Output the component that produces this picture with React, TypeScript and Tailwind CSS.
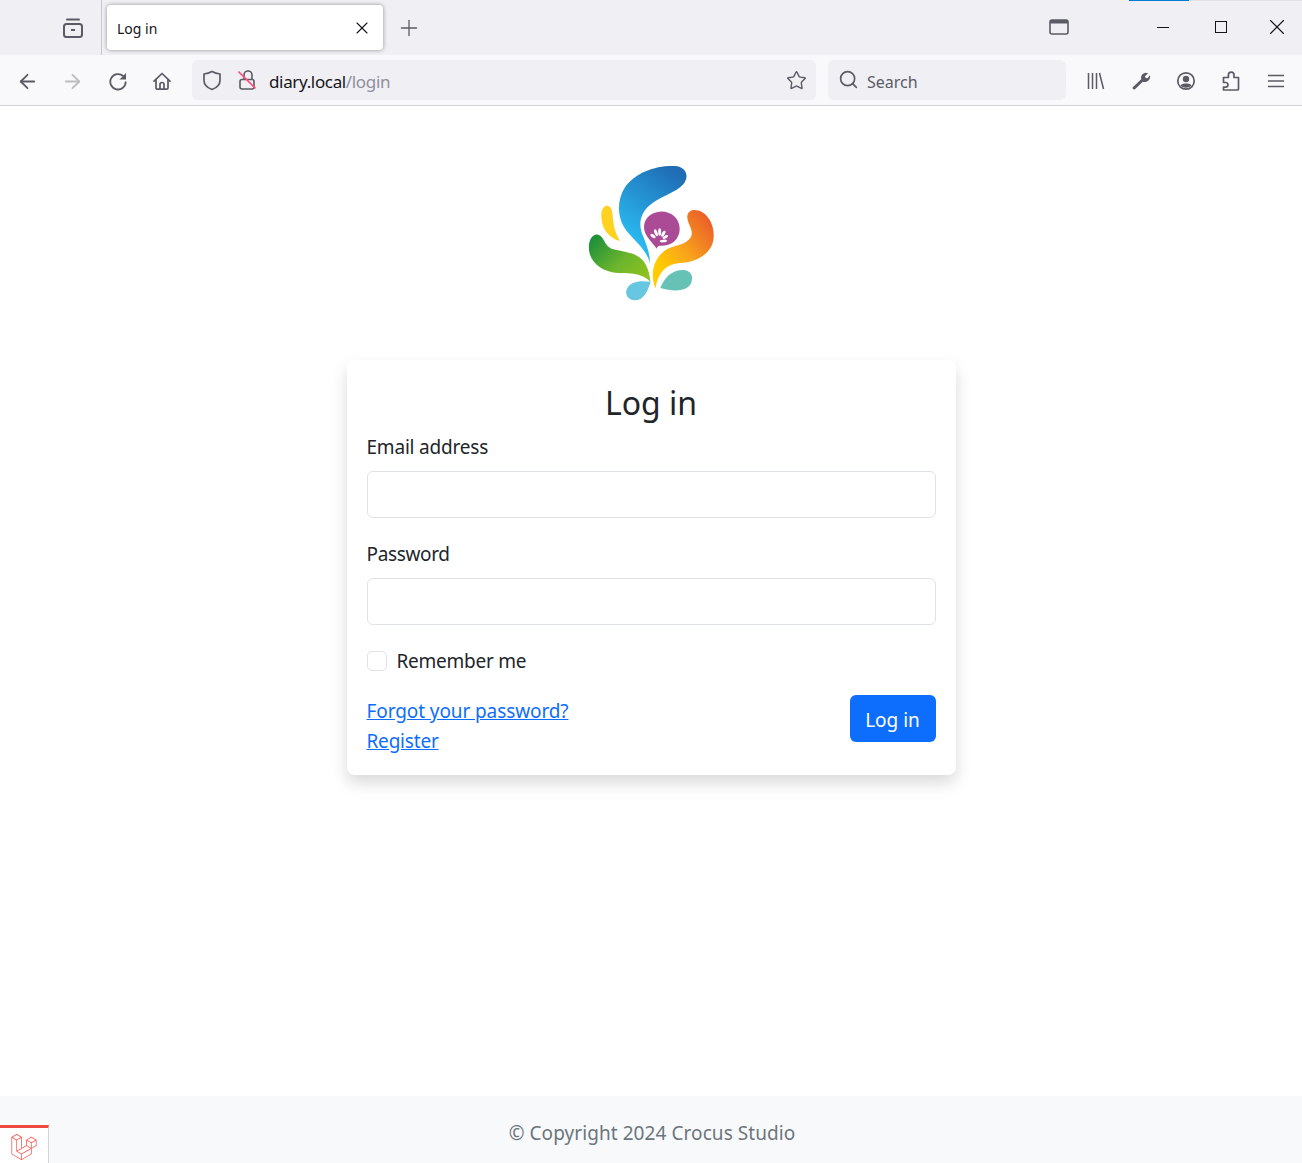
import { ArrowLeft, ArrowRight, Plus, Search, Star, X } from "lucide-react";
import { SiLaravel } from "react-icons/si";

const ToolButton = ({ children }: { children: React.ReactNode }) => (
  <div className="w-[45px] h-full flex items-center justify-center pt-[2px] text-[#5b5b66]">{children}</div>
);

const FirefoxView = () => (
  <svg width="22" height="22" viewBox="0 0 22 22" fill="none" stroke="#5b5b66" strokeWidth="2">
    <path d="M5 2.500h12" strokeLinecap="round" />
    <rect x="2" y="7" width="18" height="13" rx="2.500" />
    <path d="M9 13h4" />
  </svg>
);

const TabsIcon = () => (
  <svg width="20" height="16" viewBox="0 0 20 16" fill="none">
    <rect x="1" y="1" width="18" height="14" rx="2" stroke="#5b5b66" strokeWidth="1.600" />
    <path d="M1 2.500a1.500 1.500 0 0 1 1.500-1.500h15a1.500 1.500 0 0 1 1.500 1.500V4.500H1z" fill="#5b5b66" />
  </svg>
);

const ReloadIcon = () => (
  <svg width="20" height="20" viewBox="0 0 20 20" fill="none">
    <path d="M15.300 5.200A7.700 7.700 0 1 0 17.700 10.500" stroke="#5b5b66" strokeWidth="1.800" />
    <path d="M18 2v6.500h-6.500z" fill="#5b5b66" />
  </svg>
);

const HomeIcon = () => (
  <svg width="20" height="20" viewBox="0 0 20 20" fill="none" stroke="#5b5b66" strokeWidth="1.700" strokeLinejoin="round" strokeLinecap="round">
    <path d="M2 10.200L10 2.500l8 7.700" />
    <path d="M4 8.500V17a1.200 1.200 0 0 0 1.200 1.200h9.600A1.200 1.200 0 0 0 16 17V8.500" />
    <path d="M8 18v-4.500a2 2 0 0 1 4 0V18" />
  </svg>
);

const ShieldIcon = () => (
  <svg width="20" height="21" viewBox="0 0 20 21" fill="none" stroke="#5b5b66" strokeWidth="1.700" strokeLinejoin="round">
    <path d="M10 1.500c2.500 1.400 5 2.200 8 2.500v6.500c0 4-3.500 7.300-8 9-4.500-1.700-8-5-8-9V4c3-.3 5.500-1.100 8-2.500z" />
  </svg>
);

const BrokenLock = () => (
  <svg width="18" height="20" viewBox="0 0 18 20" fill="none">
    <path d="M6 9.500V5a4 4 0 0 1 8 0v4.500" stroke="#5b5b66" strokeWidth="1.600" />
    <rect x="2" y="9.500" width="14" height="9.500" rx="2" stroke="#5b5b66" strokeWidth="1.600" />
    <path d="M0.500 1.500l17 17" stroke="#ff4f79" strokeWidth="1.600" />
  </svg>
);

const LibraryIcon = () => (
  <svg width="18" height="18" viewBox="0 0 18 18" fill="none" stroke="#5b5b66" strokeWidth="1.500">
    <path d="M1.500 1v16M5.500 1v16M9.500 1v16M12.500 1l4 16" />
  </svg>
);

const WrenchIcon = () => (
  <svg width="20" height="20" viewBox="0 0 20 20">
    <path fill="#5b5b66" d="M1.800 16.300L10.200 8.200C9.500 5 11.500 2 15 1.800C15.800 1.800 16.500 2 17 2.200L13.800 5.400L14.800 7L16.500 7.200L19 4.200C19.700 7.800 17.300 11 13.500 11C12.800 11 12.300 10.900 11.800 10.700L4 18.300C3 19.300 0.800 17.500 1.800 16.300Z" />
  </svg>
);

const AccountIcon = () => (
  <svg width="20" height="20" viewBox="0 0 20 20" fill="none">
    <circle cx="10" cy="10" r="8.200" stroke="#5b5b66" strokeWidth="1.700" />
    <circle cx="10" cy="8" r="3.200" fill="#5b5b66" />
    <path d="M4.500 14.500c1-1.500 2.800-2 5.500-2s4.500.5 5.500 2c-1.400 1.400-3.300 2.200-5.500 2.200s-4.100-.8-5.500-2.200z" fill="#5b5b66" />
  </svg>
);

const PuzzleIcon = () => (
  <svg width="18" height="20" viewBox="0 0 18 20" fill="none" stroke="#5b5b66" strokeWidth="1.700" strokeLinejoin="round">
    <path d="M1.500 19h14a1 1 0 0 0 1-1V6.500h-4.500V4a2.800 2.800 0 0 0-5.600 0v2.500H1.500V11.500h2.200a2.300 2.300 0 0 1 0 4.600H1.500z" />
  </svg>
);

const MenuIcon = () => (
  <svg width="16" height="14" viewBox="0 0 16 14" fill="none" stroke="#5b5b66" strokeWidth="1.500">
    <path d="M0 1.500h16M0 7h16M0 12.500h16" />
  </svg>
);

const Logo = () => (
  <svg width="150" height="155" viewBox="0 0 450 465" className="mr-[2px]">
    <defs>
      <linearGradient id="blue" x1="0.7" y1="0" x2="0.3" y2="0.8">
        <stop offset="0" stopColor="#1f6db5" />
        <stop offset="1" stopColor="#2ab9ef" />
      </linearGradient>
      <linearGradient id="green" x1="0" y1="0" x2="1" y2="0.8">
        <stop offset="0" stopColor="#0f8a3c" />
        <stop offset="0.6" stopColor="#6cb52d" />
        <stop offset="1" stopColor="#8dc21f" />
      </linearGradient>
      <linearGradient id="orange" x1="0.9" y1="0.05" x2="0.2" y2="0.8">
        <stop offset="0" stopColor="#ea5b2a" />
        <stop offset="0.6" stopColor="#f9a51a" />
        <stop offset="1" stopColor="#ffcc00" />
      </linearGradient>
    </defs>
    <path fill="url(#blue)" d="M225 325C215 285 180 258 155 228C125 190 125 135 150 97C180 52 245 30 300 33C332 35 345 62 325 88C305 112 255 125 225 150C195 175 188 210 205 245C215 270 225 295 225 325Z" />
    <path fill="#ab4b96" d="M245 281C240 272 230 264 222 252C204 232 202 205 218 187C238 165 275 163 297 183C320 204 320 240 297 260C283 272 262 272 253 272C248 274 246 277 245 281Z" />
    <g fill="#fff">
      <ellipse cx="234" cy="243" rx="5" ry="9" transform="rotate(-55 234 243)" />
      <ellipse cx="243" cy="233" rx="4.500" ry="11" transform="rotate(-20 243 233)" />
      <ellipse cx="254" cy="231" rx="4.500" ry="11" />
      <ellipse cx="265" cy="236" rx="4.500" ry="10" transform="rotate(30 265 236)" />
      <ellipse cx="271" cy="246" rx="4.500" ry="9" transform="rotate(65 271 246)" />
      <ellipse cx="265" cy="258" rx="4" ry="11" transform="rotate(85 265 258)" />
    </g>
    <path fill="#ffd21f" d="M135 258C103 250 80 222 79 185C78 160 90 149 100 153C114 158 112 180 115 200C118 225 125 240 135 258Z" />
    <path fill="url(#green)" d="M226 380C205 358 175 354 130 354C85 352 46 325 42 285C39 252 55 234 70 239C90 246 85 272 115 283C150 292 190 292 210 325C220 342 224 360 226 380Z" />
    <path fill="url(#orange)" d="M241 400C226 360 233 318 265 290C290 268 330 275 348 245C358 225 335 205 337 183C340 163 362 160 382 172C407 187 422 225 414 260C404 300 360 322 315 324C275 327 250 350 241 400Z" />
    <path fill="#66c2b4" d="M256 399C268 368 290 345 325 345C347 345 358 365 347 387C333 410 295 410 256 399Z" />
    <path fill="#68c7e0" d="M227 380C205 378 180 375 162 392C146 408 153 434 178 436C205 437 218 410 227 380Z" />
  </svg>
);

export default function App() {
  return (
    <div className="relative min-h-screen flex flex-col bg-white text-[#212529] font-['Noto_Sans','Open_Sans',sans-serif]">
      {/* window title bar */}
      <div className="relative h-[55px] bg-[#f0f0f4] flex items-stretch shrink-0">
        <div className="absolute top-0 left-[1129px] w-[60px] h-px bg-[#0078d4]" />
        <div className="absolute top-0 left-[1189px] right-0 h-px bg-[#e2e2e6]" />
        <div className="w-[102px] border-r border-[#c8c8cc] flex items-center justify-end pr-[17px]">
          <FirefoxView />
        </div>
        <div className="ml-[5px] mt-[5px] w-[276px] h-[45px] bg-white rounded-[4px] shadow-[0_0_4px_rgba(0,0,0,0.4)] flex items-center justify-between pl-[10px] pr-[11px]">
          <span className="text-[14px] text-[#15141a] leading-none pt-[3px]">Log in</span>
          <X size={20} strokeWidth={1.3} className="text-[#15141a]" />
        </div>
        <div className="w-[52px] flex items-center justify-center text-[#5b5b66]">
          <Plus size={26} strokeWidth={1.2} />
        </div>
        <div className="flex-1 flex items-center justify-end pr-[233px] pb-[1px]">
          <TabsIcon />
        </div>
        <div className="absolute right-0 top-0 h-full flex items-center pb-[1px]">
          <div className="w-[57px] mr-[1px] flex justify-center"><div className="w-[12px] h-px bg-[#15141a]" /></div>
          <div className="w-[57px] mr-[3px] flex justify-center"><div className="w-[12px] h-[12px] border border-[#15141a]" /></div>
          <div className="w-[50px] flex justify-center"><X size={26} strokeWidth={1} className="text-[#15141a]" /></div>
        </div>
      </div>

      {/* toolbar */}
      <div className="h-[51px] bg-[#f9f9fb] border-b border-[#cfcfd8] flex items-center pl-[5px] shrink-0">
        <ToolButton><ArrowLeft size={23} strokeWidth={1.9} /></ToolButton>
        <ToolButton><ArrowRight size={23} strokeWidth={1.9} className="text-[#bdbdc1]" /></ToolButton>
        <ToolButton><ReloadIcon /></ToolButton>
        <div className="w-[44px] h-full flex items-center justify-center pt-[2px]"><HomeIcon /></div>
        <div className="ml-[8px] w-[624px] h-[40px] bg-[#f0f0f4] rounded-[6px] flex items-center pl-[10px] pr-[9px]">
          <ShieldIcon />
          <div className="ml-[16px]"><BrokenLock /></div>
          <span className="ml-[13px] pt-[3px] text-[17px] leading-none tracking-[-0.35px] text-[#15141a]">
            diary.local<span className="text-[#8f8f9d]">/login</span>
          </span>
          <Star size={21} strokeWidth={1.6} className="ml-auto text-[#5b5b66]" />
        </div>
        <div className="ml-[12px] w-[238px] h-[40px] bg-[#f0f0f4] rounded-[6px] flex items-center pl-[10px]">
          <Search size={21} strokeWidth={1.9} className="text-[#5b5b66] mb-[2px]" />
          <span className="ml-[8px] pt-[3px] text-[16px] leading-none text-[#5b5b66]">Search</span>
        </div>
        <div className="ml-[7px] flex h-full">
          <ToolButton><LibraryIcon /></ToolButton>
          <ToolButton><WrenchIcon /></ToolButton>
          <ToolButton><AccountIcon /></ToolButton>
          <ToolButton><PuzzleIcon /></ToolButton>
          <ToolButton><MenuIcon /></ToolButton>
        </div>
      </div>

      {/* page */}
      <main className="flex-1 flex flex-col items-center pt-[49px]">
        <Logo />
        <div className="mt-[50px] w-[609px] bg-white rounded-lg shadow-[0_8px_16px_rgba(0,0,0,0.15)] px-5 pt-[20px] pb-[19px] tracking-[-0.2px]">
          <h1 className="text-center text-[32px] tracking-normal leading-[46px] mb-[6px]">Log in</h1>
          <label className="block text-[19px] leading-[30px] mb-[9px]">Email address</label>
          <input type="text" className="block w-full h-[47px] border border-[#dee2e6] rounded-[6px] outline-none" />
          <label className="block mt-[21px] text-[19px] leading-[30px] mb-[9px] tracking-[-0.35px]">Password</label>
          <input type="password" className="block w-full h-[47px] border border-[#dee2e6] rounded-[6px] outline-none" />
          <div className="mt-[21px] flex items-center h-[30px]">
            <div className="w-[20px] h-[20px] border border-[#dee2e6] rounded-[5px]" />
            <span className="ml-[10px] text-[19px] leading-[30px] tracking-[-0.25px]">Remember me</span>
          </div>
          <div className="mt-[19px] flex justify-between items-start">
            <div className="flex flex-col items-start pt-[1px] tracking-[-0.1px]">
              <a href="#" className="text-[19px] leading-[30px] text-[#0d6efd] underline">Forgot your password?</a>
              <a href="#" className="text-[19px] leading-[30px] text-[#0d6efd] underline tracking-[-0.2px]">Register</a>
            </div>
            <button className="w-[86px] h-[47px] pt-[4px] tracking-normal bg-[#0d6efd] text-white text-[19px] rounded-[6px]">Log in</button>
          </div>
        </div>
      </main>

      {/* footer */}
      <footer className="h-[67px] pt-[8px] pl-[2px] bg-[#f8f9fa] flex items-center justify-center shrink-0 text-[19px] tracking-[0.07px] text-[#6c757d]">
        © Copyright 2024 Crocus Studio
      </footer>

      {/* debugbar */}
      <div className="absolute left-0 bottom-0 w-[49px] h-[38px] pt-[3px] bg-white border-t-[3px] border-t-[#ef4b3f] border-r border-r-[#d5d5d5] flex items-center justify-center">
        <SiLaravel size={26} className="text-[#f4645f]" />
      </div>
    </div>
  );
}
